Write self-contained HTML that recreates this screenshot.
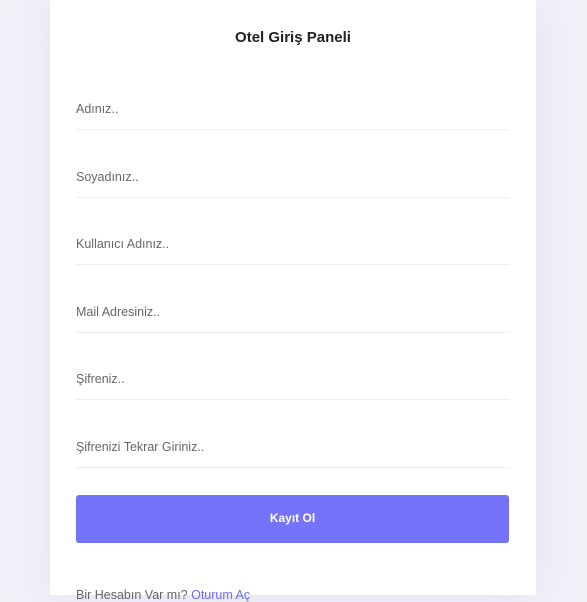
<!DOCTYPE html>
<html><head><meta charset="utf-8"><style>
html,body{margin:0;padding:0;width:587px;height:595px;overflow:hidden;background:#f1f1f8;font-family:"Liberation Sans",sans-serif;}
.card{position:absolute;left:50px;top:0;width:486px;height:595px;background:#fff;box-shadow:0 0 40px rgba(120,120,220,0.12);}
h1{position:absolute;left:0;width:486px;top:29px;margin:0;text-align:center;font-size:15px;font-weight:bold;color:#222;}
.f{position:absolute;left:26px;width:433px;height:0;border-bottom:1px solid #eeeef0;}
.f span{position:absolute;left:0;top:-27px;font-size:12.5px;color:#666;}
.btn{position:absolute;left:26px;top:495px;width:433px;height:48px;background:#7573f9;border-radius:3px;color:#fff;font-weight:bold;font-size:12px;text-align:center;line-height:46px;}
.b{position:absolute;left:26px;top:588px;font-size:12.5px;color:#666;}
.b a{color:#6c6af5;text-decoration:none;}
</style></head><body>
<div class="card">
<h1>Otel Giriş Paneli</h1>
<div class="f" style="top:129px"><span>Adınız..</span></div>
<div class="f" style="top:197px"><span>Soyadınız..</span></div>
<div class="f" style="top:264px"><span>Kullanıcı Adınız..</span></div>
<div class="f" style="top:332px"><span>Mail Adresiniz..</span></div>
<div class="f" style="top:399px"><span>Şifreniz..</span></div>
<div class="f" style="top:467px"><span>Şifrenizi Tekrar Giriniz..</span></div>
<div class="btn">Kayıt Ol</div>
<div class="b">Bir Hesabın Var mı? <a>Oturum Aç</a></div>
</div>
</body></html>
